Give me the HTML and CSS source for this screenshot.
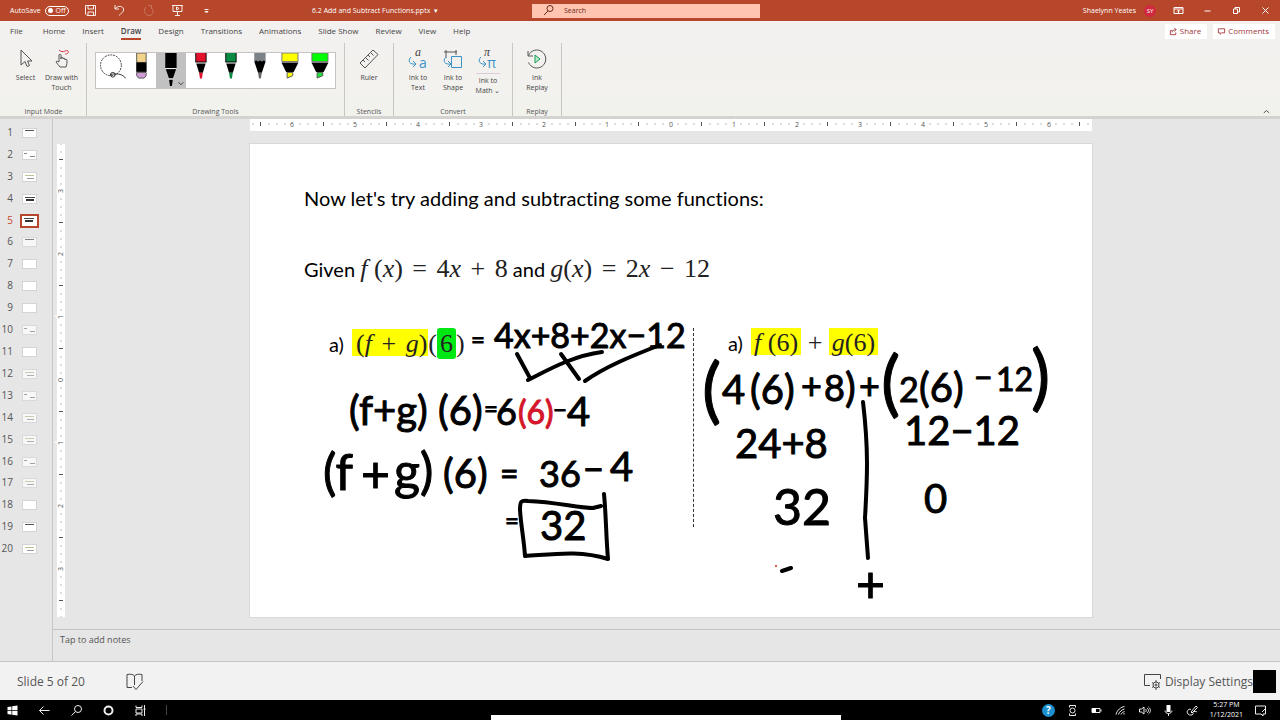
FILE: index.html
```html
<!DOCTYPE html>
<html lang="en">
<head>
<meta charset="utf-8">
<title>6.2 Add and Subtract Functions.pptx</title>
<link rel="stylesheet" href="styles.css">
</head>
<body>
<header class="titlebar">
  <div class="quick">
    <label class="autosave">AutoSave <input type="checkbox" class="switch-input"><span class="switch"><i></i>Off</span></label>
    <button aria-label="Save"><svg class="ic" viewBox="0 0 13 13"><path d="M2 1.500h9.500v10H3L1.500 10V1.500zM4 1.500v3.500h5.500V1.500M4 11.500V8h5.500v3.500"/></svg></button>
    <button aria-label="Undo"><svg class="ic" viewBox="0 0 13 13"><path d="M2 1v4h4M2 5c3-4 8-3 8.500 0S8 9.500 6 11.500"/></svg></button>
    <button aria-label="Redo" disabled><svg class="ic" viewBox="0 0 13 13"><path d="M9.500 1.500v3.500M4 3C0 7 4 11.500 7 11.500S13 8 9.500 4M9.500 1.500h-3"/></svg></button>
    <button aria-label="Start slide show"><svg class="ic" viewBox="0 0 13 13"><path d="M1 1.500h11M2 1.500v6h9v-6M6.500 7.500v4M4 11.500h5"/><path d="M5.500 3v3L8 4.500z"/></svg></button>
    <button aria-label="Customize"><svg class="ic" viewBox="0 0 13 13"><path d="M4.500 5.500h4M5 7.500h3L6.500 9z"/></svg></button>
  </div>
  <div class="doc-name">6.2 Add and Subtract Functions.pptx <span class="caret">▾</span></div>
  <label class="search"><svg class="ic" viewBox="0 0 13 13"><circle cx="8" cy="4.500" r="3"/><path d="M6 7l-4 4"/></svg><input type="search" placeholder="Search" aria-label="Search"></label>
  <div class="account">
    <span>Shaelynn Yeates</span><span class="avatar">SY</span>
    <button aria-label="Ribbon display options"><svg class="ic" viewBox="0 0 13 13"><path d="M2 3.500h9v6H2zM2 5h9M6.500 9V6M5 7.500L6.500 6 8 7.500"/></svg></button>
    <button aria-label="Minimize"><svg class="ic" viewBox="0 0 13 13"><path d="M3.500 7h6"/></svg></button>
    <button aria-label="Restore"><svg class="ic" viewBox="0 0 13 13"><path d="M3.500 5h4v4.500h-4zM5 5V3.500h4.500V8h-2"/></svg></button>
    <button aria-label="Close"><svg class="ic" viewBox="0 0 13 13"><path d="M3.500 3.500l6 6M9.500 3.500l-6 6"/></svg></button>
  </div>
</header>

<nav class="tabs">
  <button>File</button><button>Home</button><button>Insert</button><button class="active">Draw</button><button>Design</button><button>Transitions</button><button>Animations</button><button>Slide Show</button><button>Review</button><button>View</button><button>Help</button>
  <div class="share">
    <button><svg class="mini" viewBox="0 0 10 10"><path d="M4 4H1.500v4.500h6V6M3.500 6c0-2 2-3 4-3M6 1l2 2-2 2"/></svg>Share</button>
    <button><svg class="mini" viewBox="0 0 10 10"><path d="M1.500 2h7v4.500H5L3.500 8V6.500h-2z"/></svg>Comments</button>
  </div>
</nav>

<section class="ribbon" aria-label="Draw tools">
  <div class="group">
    <div class="tools">
      <button class="tool"><svg class="big" viewBox="0 0 22 22"><path d="M6 2v15l4-3.500 2 5 2.500-1-2-4.500H17z"/></svg>Select</button>
      <button class="tool"><svg class="big" viewBox="0 0 22 22"><path d="M9 19c-1-2-3-3-4-5 0-1 2-1 3 0V7c0-1 2-1 2 0v4-1c0-1 2-1 2 0v1c0-1 2-1 2 0v1c0-1 2-1 2 0 0 3 0 4-1 7z"/><path class="red" d="M8 2c4 4 8-1 9 1s-1 3-3 3"/></svg>Draw with<br>Touch</button>
    </div>
    <h2>Input Mode</h2>
  </div>
  <div class="group">
    <div class="pens">
      <button aria-label="Lasso select"><svg viewBox="0 0 30 37"><circle cx="15" cy="13" r="11" class="dash"/><circle cx="17" cy="23" r="2.500" class="line"/><path d="M14 23c7-2 13-1 17 4" class="line"/></svg></button>
      <button aria-label="Eraser"><svg viewBox="0 0 30 37"><path fill="#f2d58b" stroke="#555" d="M10.500 0h10v10h-10z"/><path d="M10 10h11v10H10z"/><path fill="#cf9bd4" stroke="#555" d="M10.500 20.500h10V24l-2 2.500h-6l-2-2.500z"/></svg></button>
      <button class="chosen" aria-label="Black pen"><svg viewBox="0 0 30 37"><path d="M9 0h12v16H9zM9.500 17h11L17 27h-4zM13 28h4l-1 7h-2z"/><path fill="none" stroke="#fff" d="M9 16.500h12M12.500 27.500h5"/><path class="line" d="M23 31l2.500 2.500L28 31"/></svg></button>
      <button aria-label="Red pen"><svg viewBox="0 0 30 37"><path d="M9 0h12v10H9zM10 11h10l-3 10h-4z"/><path fill="#e3122c" d="M10 0h10v9H10zM13 21h4l-1 6h-2z"/></svg></button>
      <button aria-label="Green pen"><svg viewBox="0 0 30 37"><path d="M9 0h12v10H9zM10 11h10l-3 10h-4z"/><path fill="#0b8a45" d="M10 0h10v9H10zM13 21h4l-1 6h-2z"/></svg></button>
      <button aria-label="Pencil"><svg viewBox="0 0 30 37"><path fill="#7b8288" d="M9 0h12v9H9z"/><path d="M9 9l2-1 2 1 2-1 2 1 2-1 2 1-4 12h-4z"/><path fill="#666" d="M13 21h4l-1 6h-2z"/></svg></button>
      <button aria-label="Yellow highlighter"><svg viewBox="0 0 30 37"><path fill="#ff0" stroke="#777" d="M6.500 0h17v9h-17z"/><path d="M6 10h18l-5 10h-8z"/><path fill="#ff0" stroke="#555" d="M12 20.500h6V24l-6 2.500z"/></svg></button>
      <button aria-label="Green highlighter"><svg viewBox="0 0 30 37"><path fill="#0f0" stroke="#777" d="M6.500 0h17v9h-17z"/><path d="M6 10h18l-5 10h-8z"/><path fill="#1fe03a" stroke="#555" d="M12 20.500h6V24l-6 2.500z"/></svg></button>
    </div>
    <h2>Drawing Tools</h2>
  </div>
  <div class="group">
    <div class="tools"><button class="tool"><svg class="big" viewBox="0 0 22 22"><path d="M2 15L15 2l5 4.500L7 20zM5 12l2 2M7.500 9.500l3 3M10 7l2 2M12.500 4.500l3 3"/></svg>Ruler</button></div>
    <h2>Stencils</h2>
  </div>
  <div class="group">
    <div class="tools convert">
      <button class="tool"><svg class="big" viewBox="0 0 22 22"><text x="8" y="8" class="ga">a</text><path class="blue" d="M4 9c-4 4-1 8 5 7M6 13l3 3-3 3"/><text x="12" y="20" class="gb">a</text></svg>Ink to<br>Text</button>
      <button class="tool"><svg class="big" viewBox="0 0 22 22"><path d="M2 4h13M4 2v8M14 2v5"/><path class="blue" d="M9.500 8.500h10v11h-10zM4 9c-4 4-1 8 5 7M6 13l3 3-3 3"/></svg>Ink to<br>Shape</button>
      <button class="tool math"><svg class="big" viewBox="0 0 22 22"><text x="7" y="8" class="ga">π</text><path class="blue" d="M4 9c-4 4-1 8 5 7M6 13l3 3-3 3"/><text x="10" y="20" class="gb">π</text></svg><span>Ink to<br>Math ⌄</span></button>
    </div>
    <h2>Convert</h2>
  </div>
  <div class="group">
    <div class="tools"><button class="tool"><svg class="big" viewBox="0 0 22 22"><path d="M2 3v5h5M2.500 7.500a9 9 0 1 1 0 7"/><path class="green" d="M9 7v8l5-4z"/></svg>Ink<br>Replay</button></div>
    <h2>Replay</h2>
  </div>
  <button class="collapse" aria-label="Collapse ribbon"><svg class="mini" viewBox="0 0 10 10"><path d="M2 6.500L5 4l3 2.500"/></svg></button>
</section>

<main class="workspace">
  <ol class="thumbs">
    <li>1<button class="t-top"></button></li>
    <li>2<button class="t-note"></button></li>
    <li>3<button class="t-green"></button></li>
    <li>4<button class="t-dark"></button></li>
    <li class="current">5<button class="t-dark"></button></li>
    <li>6<button class="t-top faint"></button></li>
    <li>7<button></button></li>
    <li>8<button></button></li>
    <li>9<button></button></li>
    <li>10<button class="t-note faint"></button></li>
    <li>11<button></button></li>
    <li>12<button class="t-green faint"></button></li>
    <li>13<button class="t-note faint"></button></li>
    <li>14<button class="t-green faint"></button></li>
    <li>15<button class="t-green faint"></button></li>
    <li>16<button class="t-note faint"></button></li>
    <li>17<button class="t-green faint"></button></li>
    <li>18<button></button></li>
    <li>19<button class="t-top"></button></li>
    <li>20<button class="t-green"></button></li>
  </ol>
  <section class="editor">
    <div class="stage">
      <svg class="ruler-h" viewBox="0 0 842 12">
        <defs><pattern id="th" x="42" width="63" height="12" patternUnits="userSpaceOnUse"><path d="M8 4v2M16 4v2M24 4v2M40 4v2M48 4v2M56 4v2" stroke="#bbb"/><path d="M31.500 3v4" stroke="#555"/></pattern></defs>
        <rect width="842" height="12" fill="#fff"/><rect width="842" height="12" fill="url(#th)"/>
        <g class="nums"><text x="42" y="8">6</text><text x="105" y="8">5</text><text x="168" y="8">4</text><text x="231" y="8">3</text><text x="294" y="8">2</text><text x="357" y="8">1</text><text x="421" y="8">0</text><text x="484" y="8">1</text><text x="547" y="8">2</text><text x="610" y="8">3</text><text x="673" y="8">4</text><text x="736" y="8">5</text><text x="799" y="8">6</text></g>
      </svg>
      <svg class="ruler-v" viewBox="0 0 8 473">
        <defs><pattern id="tv" y="47" width="8" height="63" patternUnits="userSpaceOnUse"><path d="M3 8h2M3 16h2M3 24h2M3 40h2M3 48h2M3 56h2" stroke="#bbb"/><path d="M2 31.500h4" stroke="#555"/></pattern></defs>
        <rect width="8" height="473" fill="#fff"/><rect width="8" height="473" fill="url(#tv)"/>
        <g class="nums"><text transform="translate(6 47) rotate(-90)">3</text><text transform="translate(6 110) rotate(-90)">2</text><text transform="translate(6 173) rotate(-90)">1</text><text transform="translate(6 236) rotate(-90)">0</text><text transform="translate(6 299) rotate(-90)">1</text><text transform="translate(6 362) rotate(-90)">2</text><text transform="translate(6 425) rotate(-90)">3</text></g>
      </svg>
      <article class="slide">
        <p class="lead">Now let's try adding and subtracting some functions:</p>
        <p class="given">Given <span class="m"><i>f</i> (<i>x</i>) <b>=</b> 4<i>x</i> <b>+</b> 8</span> and <span class="m"><i>g</i>(<i>x</i>) <b>=</b> 2<i>x</i> <b>−</b> 12</span></p>
        <div class="cols">
          <p>a) <span class="m"><mark>(<i>f</i> <b>+</b> <i>g</i>)</mark>(<mark class="lime">6</mark>)</span></p>
          <p>a) <span class="m"><mark><i>f</i> (6)</mark> + <mark><i>g</i>(6)</mark></span></p>
        </div>
        <!-- Ink layer: handwriting and pen strokes over the slide -->
        <svg class="ink" viewBox="250 144 842 473">
          <g class="hand">
            <text x="471" y="348" class="s24">=</text><text x="494" y="348" class="s34">4x+8+2x−12</text>
            <text x="349" y="425" class="s40">(f+g)</text><text x="438" y="425" class="s40">(6)</text><text x="484" y="417" class="s24">=</text><text x="496" y="425" class="s36">6</text>
            <text x="518" y="424" class="s32 rd">(6)</text><text x="553" y="418" class="s24">−</text><text x="567" y="426" class="s40">4</text>
            <text x="323" y="490" class="s50">(f</text><text x="361" y="492" class="s50">+</text><text x="394" y="489" class="s50">g)</text><text x="443" y="488" class="s40">(6)</text><text x="500" y="485" class="s32">=</text><text x="539" y="487" class="s36">36</text><text x="583" y="482" class="s36">−</text><text x="610" y="481" class="s40">4</text>
            <text x="505" y="529" class="s24">=</text><text x="540" y="540" class="s40">32</text>
            <text x="702" y="415" class="s72">(</text><text x="722" y="404" class="s40">4</text><text x="750" y="404" class="s40">(6)</text><text x="801" y="399" class="s36">+</text><text x="824" y="401" class="s36">8</text><text x="845" y="402" class="s40">)</text><text x="859" y="399" class="s36">+</text>
            <text x="881" y="408" class="s72">(</text><text x="899" y="402" class="s34">2</text><text x="919" y="402" class="s40">(6)</text><text x="974" y="389" class="s32">−</text><text x="996" y="391" class="s32">12</text><text x="1031" y="402" class="s72">)</text>
            <text x="735" y="458" class="s40">24+8</text><text x="904" y="445" class="s40">12−12</text>
            <text x="773" y="525" class="s50">32</text><text x="924" y="513" class="s40">0</text><text x="856" y="602" class="s50">+</text>
          </g>
          <g class="stroke">
            <path d="M517 354l13 24M528 380c20-10 44-24 74-28M561 354l18 25M585 381c20-14 44-24 75-36"/>
            <path d="M525 556c-1-16-4-30-5-46 0-9 1-10 8-9 28 1 50 7 65 7l8-2M604 494c2 20 2 42 4 65-28-9-53-5-83-3"/>
            <path d="M863 402c6 50 4 80 2 116l3 40M782 571l9-3"/>
          </g>
          <circle cx="776" cy="566" r="1" fill="#c22"/>
        </svg>
      </article>
    </div>
    <div class="notes">Tap to add notes</div>
  </section>
</main>

<footer class="status">
  <span>Slide 5 of 20</span>
  <button aria-label="Spelling"><svg class="st" viewBox="0 0 20 18"><path d="M9.500 3C8 1 5 1 2 1.500v13h5M9.500 3C11 1 14 1 17 1.500V8M9.500 3v9M8 13l3 3.500 7-8"/></svg></button>
  <button class="display"><svg class="st" viewBox="0 0 20 18"><path d="M7 12.500H1.500v-11h16V6"/><circle cx="13" cy="12" r="3"/><circle cx="13" cy="12" r="1"/><path d="M13 7v2M13 15v2M9 9.500l1.500 1M15.500 13.500l1.500 1M9 14.500l1.500-1M15.500 10.500l1.500-1"/></svg>Display Settings</button>
  <span class="block"></span>
</footer>

<footer class="taskbar">
  <div class="left">
    <button aria-label="Start"><svg class="ic" viewBox="0 0 13 13"><path class="w" d="M1.500 3l4-.6v3.800h-4zM6.200 2.300L11.500 1.500v4.700H6.200zM1.500 6.900h4v3.800l-4-.6zM6.200 6.900h5.300v4.700l-5.300-.8z"/></svg></button>
    <button aria-label="Back"><svg class="ic" viewBox="0 0 13 13"><path d="M11.500 6.500h-10M5.500 2.500l-4 4 4 4"/></svg></button>
    <button aria-label="Search"><svg class="ic" viewBox="0 0 13 13"><circle cx="8" cy="5" r="3.500"/><path d="M5.500 7.500L1.500 11.500"/></svg></button>
    <button aria-label="Cortana"><svg class="ic thick" viewBox="0 0 13 13"><circle cx="6.500" cy="6.500" r="4"/></svg></button>
    <button aria-label="Task view"><svg class="ic" viewBox="0 0 13 13"><path d="M2 1.500v2h6v-2M2 5h6v4H2zM2 12v-2h6v2M10.500 1v11M9.500 5h2"/></svg></button>
    <span class="sep"></span>
  </div>
  <div class="popup"></div>
  <div class="right">
    <button class="help" aria-label="Get help">?</button>
    <button aria-label="Sync"><svg class="ic" viewBox="0 0 13 13"><circle cx="6.500" cy="6.500" r="2.500"/><path d="M3.500 3.500v-2h6v2M3.500 9.500v2h6v-2"/></svg></button>
    <button aria-label="Battery"><svg class="ic" viewBox="0 0 13 13"><path d="M2 4.500h8v4H2zM11 5.500v2"/><path class="w" d="M2 4.500h4v4H2z"/></svg></button>
    <button aria-label="Wi-Fi"><svg class="ic" viewBox="0 0 13 13"><path d="M2 10.500C3 6 7 3 10.500 2.500M4.500 10.500C5 8 8 5.500 10.500 5M7 10.500c0-1 2-2.500 3.500-3M10 10.500V9"/></svg></button>
    <button aria-label="Volume"><svg class="ic" viewBox="0 0 13 13"><path d="M1.500 5v3h2L6 10V3L3.500 5zM7.500 5c1 1 1 2 0 3M9 4c2 2 2 3 0 5M10.500 3c2.500 2 2.500 5 0 7"/></svg></button>
    <button aria-label="Microphone"><svg class="ic" viewBox="0 0 13 13"><path class="w" d="M4.500 1h4v7h-4z"/><path d="M3 6.500c0 4 7 4 7 0M6.500 9.500V12"/></svg></button>
    <button aria-label="Pen"><svg class="ic" viewBox="0 0 13 13"><path d="M5 8l5-6 1.500 1.500L6 9zM5 5.500C2 4 0 8 2 10s6 1 5-1 3-2 4-1"/></svg></button>
    <time>5:27 PM<br>1/12/2021</time>
    <button aria-label="Notifications"><svg class="ic" viewBox="0 0 13 13"><path d="M1.500 2h10v8H9v2L7 10H1.500zM8 8l3-3"/></svg></button>
  </div>
</footer>
</body>
</html>
```
FILE: styles.css
```css
* { box-sizing: border-box; }
body {
  margin: 0;
  min-height: 100vh;
  display: flex;
  flex-direction: column;
  font-family: "Open Sans", "Noto Sans", sans-serif;
  font-size: 7px;
  line-height: 10px;
  color: #444;
  background: #e6e6e6;
}
button { border: 0; padding: 0; margin: 0; background: none; font: inherit; color: inherit; }
svg { display: block; fill: none; stroke: none; overflow: visible; }
h2, p, ol { margin: 0; padding: 0; font-weight: normal; }
.ic { width: 13px; height: 13px; stroke: currentColor; }
.ic .w { fill: #fff; stroke: none; }
.ic.thick { stroke-width: 2px; }

.titlebar { display: flex; align-items: center; height: 21px; padding: 0 8px 0 10px; background: #b7472a; color: #fff; }
.quick { display: flex; align-items: center; gap: 16px; width: 302px; }
.quick button { opacity: .9; }
.quick button:disabled { opacity: .25; }
.autosave { display: flex; align-items: center; gap: 4px; margin-right: -2px; width: 60px; white-space: nowrap; }
.switch-input { position: absolute; opacity: 0; }
.switch { display: flex; align-items: center; gap: 3px; height: 10px; width: 24px; padding-left: 2px; border: 1px solid #fff; border-radius: 5px; }
.switch i { width: 5px; height: 5px; border-radius: 50%; background: #fff; }
.doc-name { flex: 0 0 220px; white-space: nowrap; }
.caret { margin-left: 2px; }
.search { display: flex; align-items: center; gap: 9px; width: 228px; height: 14px; padding-left: 10px; background: #ffc5b1; color: #6b2a1a; }
.search input { flex: 1; min-width: 0; border: 0; padding: 0; background: none; font: inherit; outline: 0; }
.search input::placeholder { color: #6b2a1a; opacity: 1; }
.account { margin-left: auto; display: flex; align-items: center; gap: 16px; }
.avatar { width: 12px; height: 12px; margin: 0 0 0 -8px; border-radius: 50%; background: #d0283f; text-align: center; line-height: 12px; font-size: 6px; }

.tabs { display: flex; align-items: center; gap: 17px; height: 20px; padding: 0 5px 0 10px; background: #f3f1ef; font-size: 8px; }
.tabs > button { height: 18px; line-height: 18px; border-bottom: 1px solid transparent; white-space: nowrap; }
.tabs > button:first-child { margin-right: 3px; }
.tabs > .active { font-weight: 600; border-bottom: 2px solid #b7472a; line-height: 17px; }
.share { margin-left: auto; display: flex; gap: 6px; }
.share button { display: flex; align-items: center; gap: 2px; height: 15px; padding: 0 6px 0 4px; background: #fff; color: #a4373a; }

.mini { width: 9px; height: 9px; stroke: currentColor; }

.ribbon { display: flex; height: 78px; padding: 2px 0 0 1px; background: linear-gradient(#f3f1ef, #f2f2ed); border-bottom: 3px solid #d5d3d1; }
.group { display: flex; flex-direction: column; align-items: center; justify-content: space-between; padding: 5px 8px 0; border-right: 1px solid #c8c6c4; }
.group h2 { font-size: 7px; line-height: 9px; color: #555; }
.tools { display: flex; gap: 3px; }
.tool { display: flex; flex-direction: column; align-items: center; width: 32px; line-height: 10px; white-space: nowrap; }
.group:first-child .tool { width: 33px; }
.big { width: 22px; height: 22px; margin-bottom: 3px; stroke: #555; }
.big .red { stroke: #d9344a; }
.big .blue { stroke: #3c93c9; }
.big .green { stroke: #17a05d; fill: #b9e5c9; }
.ga { font: italic 12px/12px "Liberation Serif", serif; fill: #444; stroke: none; }
.gb { font: 14px/14px "Open Sans", sans-serif; fill: #3c93c9; stroke: none; }
.math span { border-top: 1px solid #d9cbd8; padding-top: 2px; }
.pens { display: flex; width: 241px; margin-top: 4px; background: #fff; border: 1px solid #c6c4c2; }
.pens button { flex: 1; }
.pens svg { width: 100%; height: 35px; fill: #000; overflow: hidden; }
.pens .chosen { background: #c1c1c1; }
.pens .dash { fill: none; stroke: #333; stroke-dasharray: 2 1; }
.pens .line { fill: none; stroke: #333; }
.collapse { margin: auto 9px 0 auto; }

.workspace { flex: 1; display: flex; }
.thumbs { display: flex; flex-direction: column; width: 52px; height: 440px; padding-top: 2px; list-style: none; font-size: 10px; color: #555; }
.thumbs li { flex: 1; display: grid; grid-template-columns: 13px 15px; gap: 9px; justify-items: end; align-items: center; }
.thumbs button { width: 15px; height: 10px; margin-top: 2px; background-color: #fff; border: 1px solid #d4d4d4; }
.thumbs .current { color: #c8482c; }
.thumbs .current button { width: 19px; height: 14px; margin-right: -2px; border: 2px solid #b7472a; }
.thumbs .t-top { background: linear-gradient(#555, #555) 2px 1px / 9px 1px no-repeat #fff; }
.thumbs .t-note { background: linear-gradient(#888, #888) 1px 2px / 3px 1px no-repeat, linear-gradient(#888, #888) 7px 5px / 5px 1px no-repeat #fff; }
.thumbs .t-green { background: linear-gradient(#bcc294, #bcc294) 2px 2px / 9px 1px no-repeat, linear-gradient(#999, #999) 4px 5px / 7px 1px no-repeat #fff; }
.thumbs .t-dark { background: linear-gradient(#444, #444) 2px 2px / 10px 1px no-repeat, linear-gradient(#333, #333) 3px 4px / 8px 2px no-repeat #fff; }
.thumbs .faint { opacity: .7; }

.editor { flex: 1; display: flex; flex-direction: column; min-width: 0; border-left: 1px solid #c6c6c6; }
.stage { flex: 1; display: grid; grid-template-columns: 8px minmax(0, 842px); grid-template-rows: 12px auto; justify-content: space-between; align-content: start; row-gap: 13px; padding: 0 188px 12px 4px; }
.ruler-h { grid-column: 2; width: 100%; }
.ruler-v { grid-column: 1; width: 8px; }
.nums { font-size: 7px; fill: #555; text-anchor: middle; paint-order: stroke; stroke: #fff; stroke-width: 3px; }
.slide { position: relative; aspect-ratio: 842 / 473; padding: 39px 54px; background: #fff; outline: 1px solid #d8d8d8; color: #000; font: 20px/30px Lato, "Open Sans", sans-serif; font-variant-ligatures: none; white-space: nowrap; }
.given { margin-top: 41px; }
.m { font-family: "Liberation Serif", serif; font-size: 26px; color: #222; }
.m b { font-weight: normal; margin: 0 3px; }
.cols { display: grid; grid-template-columns: 365px 1fr; height: 199px; margin: 44px 0 0 25px; }
.cols p:first-child { border-right: 1px dashed #333; }
.cols p:last-child { padding-left: 34px; }
.cols .m { margin-left: 3px; }
mark { display: inline-block; height: 27px; line-height: 29px; padding: 0 3px; background: #ff0; color: #222; }
.cols p:first-child mark { padding: 0 1px 0 4px; }
.cols p:first-child .lime { height: 31px; line-height: 31px; background: #00e813; border-radius: 3px; padding: 0 3px; }
.ink { position: absolute; inset: 0; width: 100%; height: 100%; pointer-events: none; }
.hand { font-family: Lato, sans-serif; fill: #000; stroke: #000; stroke-width: 1px; stroke-linejoin: round; }
.hand .rd { fill: #d4152b; stroke: #d4152b; }
.s24 { font-size: 24px; }
.s32 { font-size: 32px; }
.s34 { font-size: 34px; }
.s36 { font-size: 36px; }
.s40 { font-size: 40px; }
.s50 { font-size: 50px; }
.s72 { font-size: 72px; }
.stroke { stroke: #000; stroke-width: 4px; stroke-linecap: round; stroke-linejoin: round; }
.notes { height: 32px; padding: 4px 7px; border-top: 1px solid #c4c4c4; font-size: 9px; line-height: 12px; color: #555; }

.status { display: flex; align-items: center; gap: 40px; height: 39px; padding: 1px 4px 0 17px; border-top: 1px solid #c4c4c4; background: #f2f2f2; font-size: 12px; line-height: 18px; color: #555; }
.st { width: 20px; height: 18px; stroke: #444; }
.display { display: flex; align-items: center; gap: 2px; margin: 0 -40px 0 auto; }
.block { width: 23px; height: 23px; background: #000; }

.taskbar { display: grid; grid-template-columns: 1fr 350px 1fr; height: 20px; background: #000; color: #eee; }
.left, .right { display: flex; align-items: center; }
.left { gap: 19px; padding-left: 6px; }
.right { justify-content: flex-end; gap: 11px; padding-right: 13px; }
.sep { width: 1px; height: 10px; background: #444; }
.popup { align-self: end; height: 5px; margin-left: 26px; margin-right: -26px; background: #fff; }
.help { width: 13px; height: 13px; border-radius: 50%; background: #1b8fd0; color: #fff; font-size: 10px; font-weight: bold; line-height: 13px; }
time { text-align: center; line-height: 10px; color: #fff; }
```
